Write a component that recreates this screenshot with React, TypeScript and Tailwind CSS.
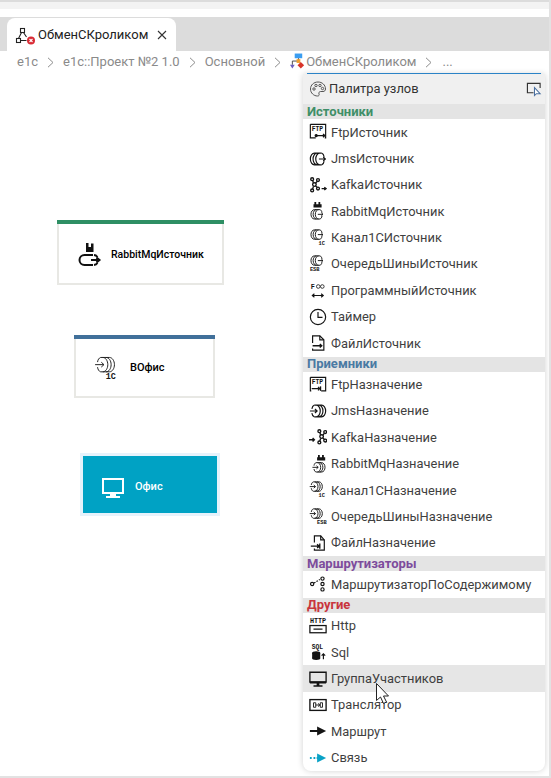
import type { ReactNode } from "react";

const S = "#141414";

function Ic({ children, size = 18 }: { children: ReactNode; size?: number }) {
  return (
    <svg width={size} height={size} viewBox="0 0 20 20" fill="none" stroke={S} strokeWidth="1.300" className="shrink-0">
      {children}
    </svg>
  );
}

function Tiny({ x, y, size = 6.500, children }: { x: number; y: number; size?: number; children: string }) {
  return (
    <text x={x} y={y} fontSize={size} fontWeight="700" fontFamily="'Liberation Mono', monospace" fill={S} stroke="none">
      {children}
    </text>
  );
}

// three coils with an arrow going out to the right
function CoilsOut({ s = 1, x = 0, y = 0 }: { s?: number; x?: number; y?: number }) {
  return (
    <g transform={`translate(${x} ${y}) scale(${s})`}>
      <path d="M6 2.500C3.500 2.500 1.500 5.500 1.500 9s2 6.500 4.500 6.500M9 2.500C6.500 2.500 4.500 5.500 4.500 9s2 6.500 4.500 6.500M12 2.500C9.500 2.500 7.500 5.500 7.500 9s2 6.500 4.500 6.500M6 2.500h8M6 15.500h8" />
      <path d="M14 2.500c1.500 .5 2.500 2 2.800 4.200M14 15.500c1.500-.5 2.500-2 2.800-4.200M11 9h7M15.800 6.800 18.200 9l-2.400 2.200" />
    </g>
  );
}

// arrow going in from the left, three coils on the right
function CoilsIn({ s = 1, x = 0, y = 0 }: { s?: number; x?: number; y?: number }) {
  return (
    <g transform={`translate(${x} ${y}) scale(${s})`}>
      <path d="M14 2.500c2.500 0 4.500 3 4.500 6.500s-2 6.500-4.500 6.500M11 2.500c2.500 0 4.500 3 4.500 6.500s-2 6.500-4.500 6.500M8 2.500c2.500 0 4.500 3 4.500 6.500s-2 6.500-4.500 6.500M14 2.500H6M14 15.500H6" />
      <path d="M6 2.500C4.500 3 3.500 4.500 3.200 6.700M6 15.500c-1.500-.5-2.500-2-2.800-4.200M1 9h8M6.600 6.800 9 9l-2.400 2.200" />
    </g>
  );
}

function Rabbit({ x = 0, y = 0 }: { x?: number; y?: number }) {
  return <path transform={`translate(${x} ${y})`} d="M6 0h2v2.500h2.500V0h2v2.500H14V6H5V2.500h1z" fill={S} stroke="none" />;
}

function KafkaNodes({ x = 0 }: { x?: number }) {
  return (
    <g transform={`translate(${x} 0)`} strokeWidth="1.500">
      <circle cx="3.500" cy="3.500" r="1.600" />
      <circle cx="10" cy="4.500" r="1.600" />
      <circle cx="3.500" cy="16" r="1.600" />
      <circle cx="10" cy="14" r="1.600" />
      <circle cx="6" cy="9.500" r="2" />
      <path d="M4 5l1 2.500M9 6 7.300 8M4 14.500l1-3M9 12.500l-1.800-1.500" />
    </g>
  );
}

const icons: Record<string, ReactNode> = {
  ftpOut: (
    <Ic>
      <path d="M1.500 1.500h17v15h-1M1.500 1.500v15h6" />
      <Tiny x={3} y={9} size={7}>FTP</Tiny>
      <path d="M8 14h9.500M15.500 12.200l2.300 1.800-2.300 1.800" />
      <circle cx="8" cy="14" r="1.200" fill={S} />
    </Ic>
  ),
  jmsOut: <Ic><CoilsOut x={0} y={1} /></Ic>,
  kafkaOut: (
    <Ic>
      <KafkaNodes />
      <path d="M14 14h5M17 12.500l2 1.500-2 1.500" strokeWidth="1.500" />
    </Ic>
  ),
  rabbitOut: (
    <Ic>
      <Rabbit x={0} y={0} />
      <CoilsOut s={0.8} x={1} y={6.500} />
    </Ic>
  ),
  oneCOut: (
    <Ic>
      <CoilsOut s={0.8} x={1} y={-1} />
      <Tiny x={10.500} y={18} size={6}>1C</Tiny>
    </Ic>
  ),
  esbOut: (
    <Ic>
      <CoilsOut s={0.8} x={1} y={-1} />
      <Tiny x={1} y={18} size={6}>ESB</Tiny>
    </Ic>
  ),
  code: (
    <Ic>
      <Tiny x={2} y={7.500} size={7.500}>F</Tiny>
      <circle cx="10.300" cy="5" r="2" strokeWidth=".9" />
      <circle cx="14.800" cy="5" r="2" strokeWidth=".9" />
      <path d="M3.500 15h12.500M6 13l-2.300 2L6 17M13.500 13l2.300 2-2.300 2" />
    </Ic>
  ),
  timer: (
    <Ic>
      <circle cx="10" cy="10" r="8.500" />
      <path d="M10 4.500v6h5" />
    </Ic>
  ),
  fileOut: (
    <Ic>
      <path d="M4 10V2h8l4.500 4.500V18H4v-2" />
      <path d="M12 2v4.500h4.500" />
      <path d="M4 13h10M12 11l2.200 2-2.200 2" strokeWidth="1.500" />
    </Ic>
  ),
  ftpIn: (
    <Ic>
      <path d="M1.500 1.500h17v15h-5M1.500 1.500v15h1" />
      <Tiny x={3} y={9} size={7}>FTP</Tiny>
      <path d="M3 14h9M10 12l2 2-2 2" />
      <path d="M12.800 11.500v5" strokeWidth="1.500" />
    </Ic>
  ),
  jmsIn: <Ic><CoilsIn x={0} y={1} /></Ic>,
  kafkaIn: (
    <Ic>
      <KafkaNodes x={8} />
      <path d="M0 13h6M4 11l2 2-2 2" strokeWidth="1.500" />
    </Ic>
  ),
  rabbitIn: (
    <Ic>
      <Rabbit x={4} y={0} />
      <CoilsIn s={0.8} x={3} y={6.500} />
    </Ic>
  ),
  oneCIn: (
    <Ic>
      <CoilsIn s={0.8} x={0} y={-1} />
      <Tiny x={10.500} y={18} size={6}>1C</Tiny>
    </Ic>
  ),
  esbIn: (
    <Ic>
      <CoilsIn s={0.8} x={0} y={-1} />
      <Tiny x={9} y={18} size={6}>ESB</Tiny>
    </Ic>
  ),
  fileIn: (
    <Ic>
      <path d="M6 9.500V2h7l4 4.500V18H6v-2" />
      <path d="M13 2v4.500h4" />
      <path d="M2 13.500h9M9 11.500l2.200 2-2.200 2M12 10.500v6" strokeWidth="1.500" />
    </Ic>
  ),
  router: (
    <Ic>
      <circle cx="3.500" cy="10" r="1.800" />
      <circle cx="15" cy="4" r="1.800" />
      <circle cx="15" cy="10" r="1.800" />
      <circle cx="15" cy="16" r="1.800" />
      <path d="M5.500 9l6.500-4" strokeDasharray="2 1.200" />
    </Ic>
  ),
  http: (
    <Ic>
      <Tiny x={1} y={6.500} size={7.500}>HTTP</Tiny>
      <rect x="1" y="9.500" width="18" height="8" strokeWidth="1.400" />
      <path d="M5 13.500h10" strokeWidth="1.400" />
    </Ic>
  ),
  sql: (
    <Ic>
      <Tiny x={3} y={6.500} size={7}>SQL</Tiny>
      <ellipse cx="8" cy="11" rx="4.500" ry="1.800" fill={S} stroke="none" />
      <rect x="3.500" y="11" width="9" height="6" fill={S} stroke="none" />
      <ellipse cx="8" cy="17" rx="4.500" ry="1.800" fill={S} stroke="none" />
      <path d="M16 18v-6M14 14l2-2 2 2" />
    </Ic>
  ),
  monitor: (
    <Ic>
      <path d="M1 2.500h18v11H1z" fill="none" strokeWidth="1.500" />
      <path d="M1 12.500h18v2.500H1zM8.500 15h3v2h-3zM5 17h10v1.500H5z" fill={S} stroke="none" />
    </Ic>
  ),
  translator: (
    <Ic>
      <rect x="1" y="4" width="18" height="12" strokeWidth="1.500" />
      <path d="M5 7.500v5h2.500v-5zM12.500 7.500v5H15v-5z" strokeWidth="1" />
      <path d="M7.500 10h5M10 8.200l2 1.800-2 1.800" strokeWidth="1" />
    </Ic>
  ),
  route: (
    <Ic>
      <path d="M1 10h9" strokeWidth="2.400" />
      <path d="M9 5l10 5-10 5z" fill={S} stroke="none" />
    </Ic>
  ),
  link: (
    <Ic>
      <path d="M1 10h2M5 10h2" stroke="#0aa2c6" strokeWidth="2.200" />
      <path d="M8.500 10h3" stroke="#0aa2c6" strokeWidth="2.200" />
      <path d="M9 5l10 5-10 5z" fill="#0aa2c6" stroke="none" />
    </Ic>
  ),
};

type Group = { title: string; color: string; items: [string, string][] };

const groups: Group[] = [
  {
    title: "Источники",
    color: "text-[#3f8f68]",
    items: [
      ["ftpOut", "FtpИсточник"],
      ["jmsOut", "JmsИсточник"],
      ["kafkaOut", "KafkaИсточник"],
      ["rabbitOut", "RabbitMqИсточник"],
      ["oneCOut", "Канал1СИсточник"],
      ["esbOut", "ОчередьШиныИсточник"],
      ["code", "ПрограммныйИсточник"],
      ["timer", "Таймер"],
      ["fileOut", "ФайлИсточник"],
    ],
  },
  {
    title: "Приемники",
    color: "text-[#4a7aa3]",
    items: [
      ["ftpIn", "FtpНазначение"],
      ["jmsIn", "JmsНазначение"],
      ["kafkaIn", "KafkaНазначение"],
      ["rabbitIn", "RabbitMqНазначение"],
      ["oneCIn", "Канал1СНазначение"],
      ["esbIn", "ОчередьШиныНазначение"],
      ["fileIn", "ФайлНазначение"],
    ],
  },
  {
    title: "Маршрутизаторы",
    color: "text-[#7d4c9c]",
    items: [["router", "МаршрутизаторПоСодержимому"]],
  },
  {
    title: "Другие",
    color: "text-[#c9353d]",
    items: [
      ["http", "Http"],
      ["sql", "Sql"],
      ["monitor", "ГруппаУчастников"],
      ["translator", "Транслятор"],
      ["route", "Маршрут"],
      ["link", "Связь"],
    ],
  },
];

function Chevron() {
  return (
    <svg width="7" height="11" viewBox="0 0 7 11" fill="none" stroke="#8c8c8c" strokeWidth="1" className="shrink-0">
      <path d="M1 .8 6 5.500 1 10.200" />
    </svg>
  );
}

function FlowIcon() {
  return (
    <svg width="16" height="18" viewBox="0 0 17 18" className="shrink-0">
      <rect x="5" y="0" width="8" height="5" fill="#3b9df0" />
      <path d="M9 5v3H2.500v4" fill="none" stroke="#444" strokeWidth="1" />
      <path d="M0 12h5l-2.500 4z" fill="#6a5fc0" />
      <rect x="7" y="6" width="4" height="4" fill="#f0a030" />
      <path d="M11.500 9l3.500 3.500-3.500 3.500-3.500-3.500z" fill="#d8352a" />
    </svg>
  );
}

export default function App() {
  return (
    <div className="relative flex h-[778px] w-[551px] flex-col overflow-hidden border-r-2 border-b-2 border-[#e2e2e2] bg-white font-['Roboto',sans-serif]">
      <div className="h-[9px] border-t-2 border-[#dcdcdc] bg-[#f3f3f3]" />
      <div className="h-2 bg-white" />

      <div className="flex h-[34px] bg-[#dcdcdc] pt-px pl-[7px]">
        <div className="flex w-[169px] items-center rounded-t-lg bg-white pl-2">
          <svg width="20" height="20" viewBox="0 0 20 20" fill="none" stroke="#222" strokeWidth="1.100" className="shrink-0">
            <rect x="5.500" y="3.500" width="4" height="4" />
            <rect x="1.500" y="13.500" width="4" height="4" />
            <path d="M6.500 7.500 3.500 13.500M8.500 7.500l3 4.500M5.500 15.500h6" />
            <circle cx="16" cy="15.500" r="4" fill="#d92b35" stroke="none" />
            <path d="M14.500 14l3 3M17.500 14l-3 3" stroke="#fff" />
          </svg>
          <span className="ml-[3px] text-[13px] text-[#222]">ОбменСКроликом</span>
          <svg width="10" height="10" viewBox="0 0 10 10" stroke="#333" strokeWidth="1.100" className="ml-[9px]">
            <path d="M1 1l8 8M9 1l-8 8" />
          </svg>
        </div>
      </div>

      <div className="flex h-[22px] items-center gap-[9px] pl-[17px] text-[13px] text-[#8a8a8a]">
        <span>e1c</span>
        <Chevron />
        <span>e1c::Проект №2 1.0</span>
        <Chevron />
        <span>Основной</span>
        <Chevron />
        <span className="flex items-center">
          <FlowIcon />
          ОбменСКроликом
        </span>
        <Chevron />
        <span className="pl-px">...</span>
      </div>

      <div className="relative flex-1">
        {/* nodes sit on a free canvas */}
        <div className="absolute top-[147px] left-[57px] flex h-[65px] w-[167px] items-center border-2 border-t-0 border-[#e8e8e4] bg-white pt-[6px] pl-[19px] before:absolute before:top-0 before:-right-[2px] before:-left-[2px] before:h-1 before:bg-[#2e8f64]">
          <svg width="24" height="26" viewBox="0 0 24 26" fill="none" stroke="#111" strokeWidth="2" className="shrink-0">
            <path d="M8 1h2.500v4H13V1.500h2.500V10H8z" fill="#111" stroke="none" />
            <path d="M15 13H6.500a5 5 0 0 0 0 10H15" />
            <path d="M16 13a5 5 0 0 1 3.500 2M16 23a5 5 0 0 0 3.500-2" />
            <path d="M13 18h8M18.500 15.500 21.500 18l-3 2.500" fill="#111" />
          </svg>
          <span className="ml-[9px] text-[10.500px] font-medium text-black">RabbitMqИсточник</span>
        </div>

        <div className="absolute top-[262px] left-[74px] flex h-[63px] w-[141px] items-center border-2 border-t-0 border-[#e8e8e4] bg-white pt-[6px] pl-[18px] before:absolute before:top-0 before:-right-[2px] before:-left-[2px] before:h-1 before:bg-[#41709a]">
          <svg width="26" height="28" viewBox="0 0 20 20" fill="none" stroke="#222" strokeWidth=".9" className="shrink-0">
            <CoilsIn s={0.85} x={0} y={-1} />
            <Tiny x={9} y={18} size={6.500}>1C</Tiny>
          </svg>
          <span className="ml-[10px] text-[11px] font-medium text-black">ВОфис</span>
        </div>

        <div className="absolute top-[380px] left-[80px] flex h-[63px] w-[140px] items-center border-[3px] border-[#e6f2fb] bg-[#00a2c4] pt-[6px] pl-[19px]">
          <svg width="22" height="22" viewBox="0 0 22 22" className="shrink-0">
            <path d="M1 2h20v14H1z" fill="none" stroke="#fff" strokeWidth="2" />
            <path d="M8 17h6v2H8zM4 19h14v2H4z" fill="#fff" />
          </svg>
          <span className="ml-[11px] text-[11px] font-medium text-white">Офис</span>
        </div>

        {/* palette overlay */}
        <div className="absolute top-0 left-[307px] h-px w-[234px] bg-[#2f8fd8]" />
        <div className="absolute top-px left-[303px] w-[242px] overflow-hidden rounded-b-lg bg-white shadow-[0_0_6px_rgba(0,0,0,0.18)]">
          <div className="flex h-[30px] items-center bg-[#f0f0f0] pl-[6px] text-[#333]">
            <svg width="18" height="18" viewBox="0 0 18 18" fill="none" stroke="#555" strokeWidth="1" className="shrink-0">
              <path d="M9 2C4.800 2 1.500 5 1.500 9s3.300 7 7 7c1.500 0 2-1 1.500-2-.6-1.300.3-2.500 1.700-2.500h2.300c1.500 0 2.500-1 2.500-2.500C16.500 5 13.200 2 9 2z" />
              <circle cx="5" cy="9" r="1.200" />
              <circle cx="7" cy="5.500" r="1.200" />
              <circle cx="11" cy="5.500" r="1.200" />
              <circle cx="13.500" cy="8.500" r="1.200" />
            </svg>
            <span className="ml-[2px] text-[12.900px]">Палитра узлов</span>
            <svg width="16" height="16" viewBox="0 0 17 16" fill="none" className="mr-[3px] ml-auto shrink-0">
              <path d="M8 12H1.500V2h13.500v5" stroke="#333" strokeWidth="1.200" />
              <path d="M9 6.500v8.500l2-2h4z" fill="#fff" stroke="#4a6fa0" strokeWidth="1.100" />
            </svg>
          </div>

          {groups.map((g) => (
            <div key={g.title}>
              <div className={`flex h-[15px] items-center bg-[#e4e4e4] pl-[4px] text-[13px] font-bold ${g.color}`}>
                {g.title}
              </div>
              {g.items.map(([ic, label]) => (
                <div
                  key={label}
                  className={`flex h-[26.400px] items-center gap-[4px] pl-[6px] text-[12.900px] text-[#3f3f3f] ${label === "ГруппаУчастников" ? "bg-[#e6e6e6]" : ""}`}
                >
                  {icons[ic]}
                  <span>{label}</span>
                </div>
              ))}
            </div>
          ))}
        </div>

        {/* mouse pointer */}
        <svg width="13" height="22" viewBox="0 0 13 22" className="absolute top-[610px] left-[376px]">
          <path d="M.5.500v17l4-3.500 3 6.500 3-1.500-3-6h5z" fill="#fff" stroke="#222" strokeWidth="1" />
        </svg>
      </div>
    </div>
  );
}
